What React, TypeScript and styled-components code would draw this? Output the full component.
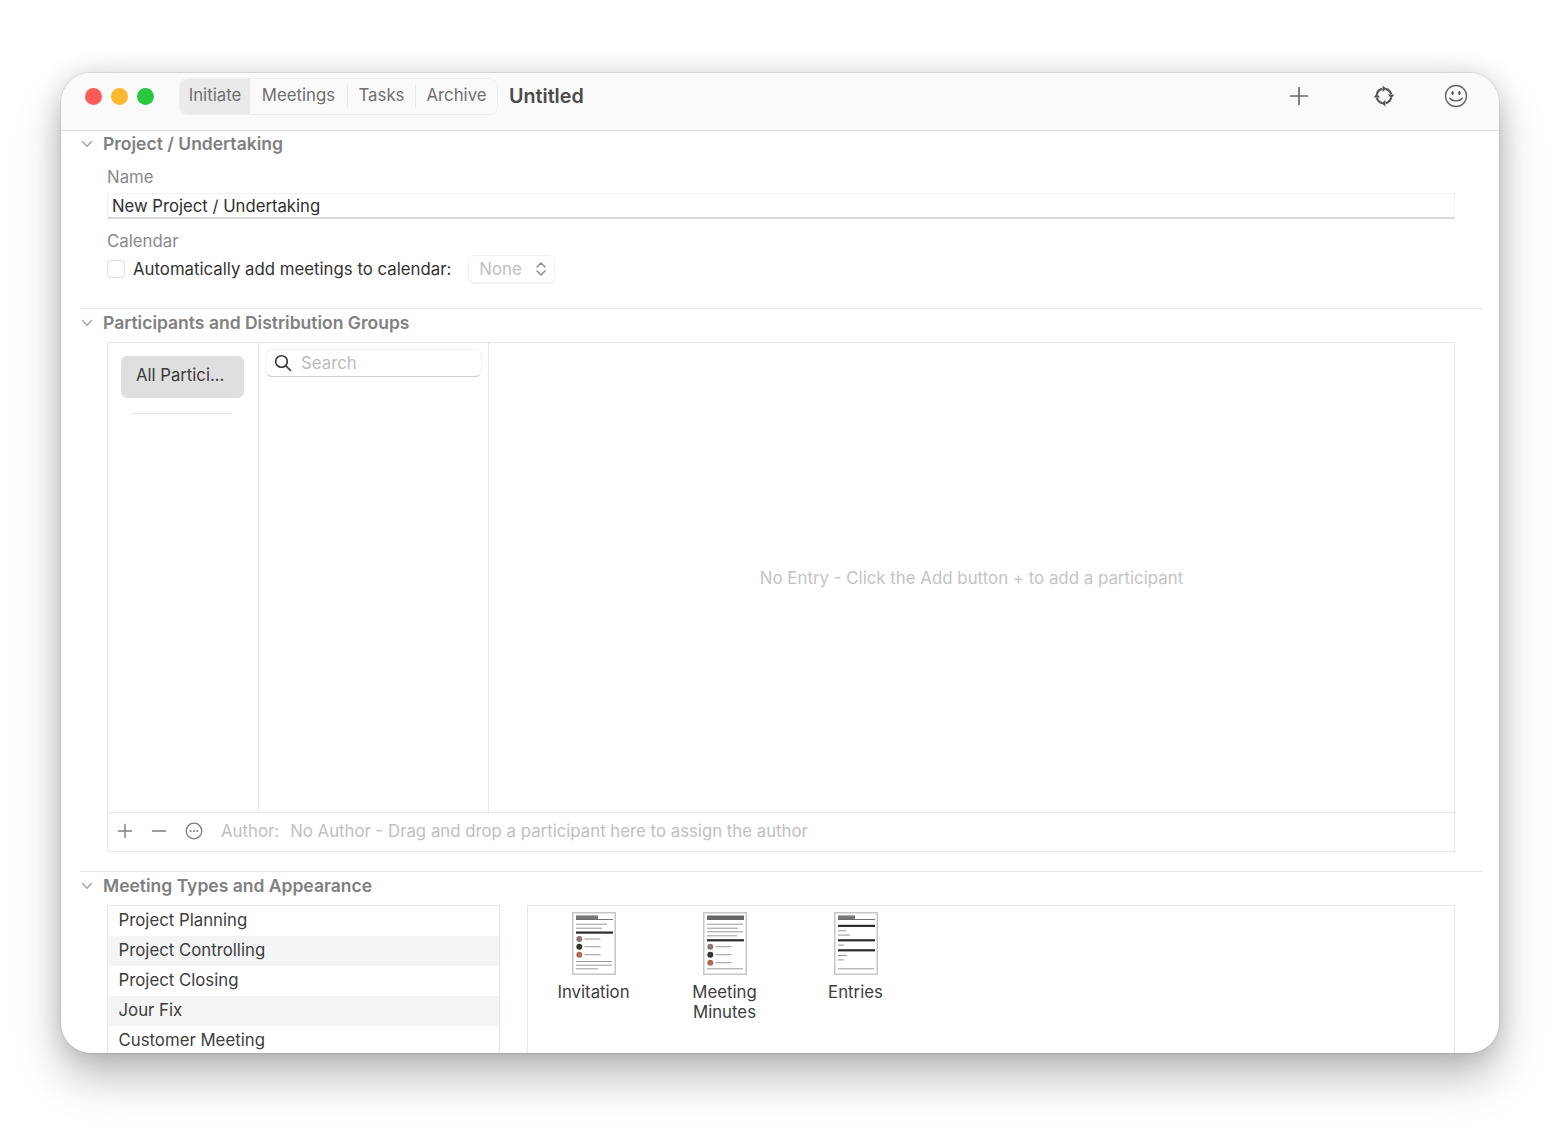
import React from "react";
import styled, { createGlobalStyle } from "styled-components";

const Global = createGlobalStyle`
  html, body { margin: 0; padding: 0; background: #fff; }
  body { font-family: Inter, "Noto Sans", "Liberation Sans", sans-serif; -webkit-font-smoothing: antialiased; overflow: hidden; }
  * { box-sizing: border-box; }
`;

const Page = styled.div`
  width: 1560px;
  height: 1134px;
  padding: 73px 61px 81px;
  background: #fff;
`;
const Win = styled.div`
  width: 1438px;
  height: 980px;
  background: #fff;
  border-radius: 30px;
  overflow: hidden;
  display: flex;
  flex-direction: column;
  box-shadow: 0 0 0 1px rgba(0, 0, 0, 0.07), 0 0 24px rgba(0, 0, 0, 0.14), 0 24px 44px rgba(0, 0, 0, 0.26);
`;
const TitleBar = styled.header`
  flex: none;
  height: 58px;
  background: #fbfafa;
  border-bottom: 1px solid #e2e1e1;
  display: flex;
  align-items: center;
  padding: 0 0 11px 24px;
`;
const Lights = styled.div`
  display: flex;
  gap: 9px;
  margin-right: 25px;
`;
const Light = styled.span<{ $c: string }>`
  width: 17px;
  height: 17px;
  border-radius: 50%;
  background: ${(p) => p.$c};
`;
const Tabs = styled.nav`
  display: flex;
  align-items: center;
  width: 319px;
  height: 37px;
  border: 1px solid #efeeee;
  border-radius: 8px;
  background: #fbfafa;
  font-size: 16.8px;
  color: #6f6f6f;
`;
const Tab = styled.div<{ $w: number; $active?: boolean; $sep?: boolean }>`
  width: ${(p) => p.$w}px;
  height: ${(p) => (p.$active ? "35px" : "23px")};
  display: flex;
  align-items: center;
  justify-content: center;
  padding-bottom: 2px;
  border-radius: ${(p) => (p.$active ? "8px 0 0 8px" : "0")};
  background: ${(p) => (p.$active ? "#ebeaea" : "transparent")};
  border-right: ${(p) => (p.$sep ? "1px solid #ebeaea" : "none")};
`;
const Title = styled.div`
  margin-left: 11px;
  font-size: 19.7px;
  font-weight: 600;
  color: #4b4b4b;
`;
const Tools = styled.div`
  margin-left: auto;
  display: flex;
  align-items: center;
  color: #6b6b6b;
`;
const Tool = styled.span<{ $w: number }>`
  width: ${(p) => p.$w}px;
  display: flex;
  justify-content: center;
`;
const Content = styled.main`
  flex: 1;
  min-height: 0;
  overflow: hidden;
  padding: 0 16px 0 19px;
`;
const Section = styled.section<{ $h: number; $rule?: boolean }>`
  height: ${(p) => p.$h}px;
  border-top: ${(p) => (p.$rule ? "1px solid #e7e7e7" : "none")};
`;
const FirstSection = styled(Section)`
  margin-top: -1px;
`;
const SectionHead = styled.div`
  height: 26px;
  display: flex;
  align-items: center;
  font-size: 17.5px;
  font-weight: 600;
  color: #808080;
`;
const Chevron = styled.svg`
  width: 12px;
  height: 8px;
  margin: 2px 10px 0 1px;
  flex: none;
`;
const Body = styled.div`
  padding-left: 27px;
  padding-right: 28px;
`;
const Label = styled.div`
  height: 22px;
  display: flex;
  align-items: center;
  font-size: 16.8px;
  color: #8a8a8a;
`;
const NameLabel = styled(Label)`
  margin-top: 10px;
`;
const Field = styled.div`
  height: 26px;
  margin-top: 5px;
  padding: 0 4px;
  display: flex;
  align-items: center;
  border: 1px solid #f1f1f1;
  border-bottom: 2px solid #d8d8d8;
  font-size: 16.7px;
  color: #2f2f2f;
`;
const CalLabel = styled(Label)`
  margin-top: 11px;
`;
const CalRow = styled.div`
  height: 28px;
  margin-top: 3px;
  display: flex;
  align-items: center;
  font-size: 16.8px;
  color: #333;
`;
const Check = styled.span`
  width: 18px;
  height: 18px;
  margin: -1px 8px 0 0;
  border: 1px solid #dedede;
  border-radius: 4px;
  background: #fff;
`;
const SelectBox = styled.div`
  width: 87px;
  height: 28px;
  margin-left: 17px;
  padding: 0 7px 0 10px;
  display: flex;
  align-items: center;
  justify-content: space-between;
  border: 1px solid #f0f0f0;
  border-radius: 6px;
  box-shadow: 0 1px 1px rgba(0, 0, 0, 0.05);
  color: #c0c0c0;
`;
const Panel = styled.div`
  height: 510px;
  margin-top: 7px;
  display: flex;
  flex-direction: column;
  border: 1px solid #e6e6e6;
`;
const Columns = styled.div`
  flex: 1;
  display: flex;
  min-height: 0;
`;
const GroupCol = styled.div`
  width: 151px;
  flex: none;
  border-right: 1px solid #e6e6e6;
  padding: 13px 13px 0 13px;
`;
const GroupBtn = styled.div`
  width: 123px;
  height: 42px;
  padding: 0 0 4px 15px;
  display: flex;
  align-items: center;
  border-radius: 6px;
  background: #dfdfdf;
  font-size: 16.7px;
  color: #3a3a3a;
`;
const GroupRule = styled.div`
  width: 100px;
  height: 1px;
  margin: 15px 0 0 11px;
  background: #e6e6e6;
`;
const SearchCol = styled.div`
  width: 230px;
  flex: none;
  border-right: 1px solid #e6e6e6;
  padding: 6px 6px 0 6px;
`;
const SearchBox = styled.div`
  height: 28px;
  display: flex;
  align-items: center;
  padding-left: 8px;
  border: 1px solid #f1f1f1;
  border-bottom: 1px solid #cfcfcf;
  border-radius: 7px;
  font-size: 16.8px;
  color: #bcbcbc;
  svg { margin-right: 9px; color: #333; }
`;
const Empty = styled.div`
  flex: 1;
  display: flex;
  align-items: center;
  justify-content: center;
  font-size: 16.85px;
  color: #c4c4c4;
`;
const Foot = styled.div`
  flex: none;
  height: 39px;
  padding: 0 0 2px 9px;
  display: flex;
  align-items: center;
  border-top: 1px solid #e6e6e6;
  font-size: 16.8px;
  color: #c0c0c0;
`;
const FootIcon = styled.span`
  width: 34px;
  display: flex;
  color: #7d7d7d;
`;
const Author = styled.span`
  margin-left: 2px;
  margin-right: 11px;
`;
const Bottom = styled.div`
  margin-top: 7px;
  display: flex;
  gap: 27px;
`;
const TypeList = styled.div`
  width: 393px;
  flex: none;
  height: 160px;
  border: 1px solid #e6e6e6;
`;
const TypeRow = styled.div<{ $alt?: boolean }>`
  height: 30px;
  padding: 0 0 2px 10.5px;
  display: flex;
  align-items: center;
  background: ${(p) => (p.$alt ? "#f3f4f4" : "#fff")};
  font-size: 16.8px;
  color: #3d3d3d;
`;
const Gallery = styled.div`
  flex: 1;
  height: 160px;
  padding: 6px 0 0 0;
  display: flex;
  border: 1px solid #e6e6e6;
`;
const Doc = styled.div`
  width: 131px;
  display: flex;
  flex-direction: column;
  align-items: center;
  font-size: 16.8px;
  line-height: 20px;
  color: #3d3d3d;
  text-align: center;
`;
const Thumb = styled.svg`
  width: 44px;
  height: 63px;
  margin-bottom: 7px;
  display: block;
  filter: blur(0.45px);
`;

const Chev = () => (
  <Chevron viewBox="0 0 12 8" fill="none" stroke="#a5a5a5" strokeWidth="1.4" strokeLinecap="round" strokeLinejoin="round">
    <path d="M1.5 1.5 6 6.2l4.5-4.7" />
  </Chevron>
);

const line = (y: number, w: number, k: string) => (
  <rect key={k} x="4" y={y} width={w} height="1" fill="#9a9a9a" />
);
const bar = (y: number, k: string) => (
  <rect key={k} x="4" y={y} width="37" height="2.2" fill="#2b2b2b" />
);
const avatar = (y: number, c: string, k: string) => (
  <g key={k}>
    <circle cx="7.3" cy={y} r="3" fill={c} />
    <rect x="12.5" y={y - 0.5} width="16" height="1" fill="#9a9a9a" />
  </g>
);
const Frame = ({ children }: { children: React.ReactNode }) => (
  <Thumb viewBox="0 0 44 63">
    <rect x="0.75" y="0.75" width="42.5" height="61.5" fill="#fff" stroke="#c6c6c6" strokeWidth="1.5" />
    {children}
  </Thumb>
);
const InvitationThumb = () => (
  <Frame>
    <rect x="4" y="3.4" width="22" height="4" fill="#777" />
    <rect x="4" y="7.2" width="37" height="0.8" fill="#555" />
    {line(11.7, 31, "a")}
    {line(15.7, 26, "b")}
    {bar(19.5, "h")}
    {avatar(27, "#8d7a70", "p1")}
    {avatar(34.7, "#3a3532", "p2")}
    {avatar(42.7, "#b06a50", "p3")}
    {line(49, 36, "c")}
    {line(52.7, 36, "d")}
    {line(56.3, 22, "e")}
  </Frame>
);
const MinutesThumb = () => (
  <Frame>
    <rect x="4" y="3.5" width="37" height="4.5" fill="#666" />
    {line(11.7, 36, "a")}
    {line(15.7, 31, "b")}
    {line(19.3, 36, "c")}
    {line(23.3, 30, "d")}
    {bar(27.2, "h")}
    {avatar(34.7, "#8d7a70", "p1")}
    {avatar(42.7, "#3a3532", "p2")}
    {avatar(50.7, "#b06a50", "p3")}
    {line(56.3, 36, "e")}
  </Frame>
);
const EntriesThumb = () => (
  <Frame>
    <rect x="4" y="3.4" width="17" height="4" fill="#777" />
    <rect x="4" y="7.2" width="37" height="0.8" fill="#555" />
    {bar(12.8, "h1")}
    {line(18.3, 8, "a")}
    {line(22.6, 12, "b")}
    {bar(27.2, "h2")}
    {line(32.6, 6, "c")}
    {bar(37.2, "h3")}
    {line(43, 9, "d")}
    {line(47.4, 6, "e")}
    {line(56.3, 36, "f")}
  </Frame>
);

export default function App() {
  return (
    <Page>
      <Global />
      <Win>
        <TitleBar>
          <Lights>
            <Light $c="#fc5b57" />
            <Light $c="#fdb82e" />
            <Light $c="#29c840" />
          </Lights>
          <Tabs>
            <Tab $w={70} $active>Initiate</Tab>
            <Tab $w={98} $sep>Meetings</Tab>
            <Tab $w={68} $sep>Tasks</Tab>
            <Tab $w={81}>Archive</Tab>
          </Tabs>
          <Title>Untitled</Title>
          <Tools>
            <Tool $w={88}>
              <svg width="20" height="20" viewBox="0 0 20 20" fill="none" stroke="currentColor" strokeWidth="1.7" strokeLinecap="round"><path d="M10 1.5v17M1.5 10h17" /></svg>
            </Tool>
            <Tool $w={82}>
              <svg width="22" height="22" viewBox="0 0 22 22" fill="none" stroke="#555" strokeWidth="2.2">
                <path d="M3.9 9.2A7.4 7.4 0 0 1 9.4 3.9" />
                <path d="M12.8 3.9a7.4 7.4 0 0 1 5.3 5.3" />
                <path d="M18.1 12.8a7.4 7.4 0 0 1-5.3 5.3" />
                <path d="M9.2 18.1a7.4 7.4 0 0 1-5.3-5.3" />
                <path d="M9.6 0.6 13.4 3.8 9.6 7zM21.4 9.6 18.2 13.4 15 9.6zM12.4 21.4 8.6 18.2 12.4 15zM0.6 12.4 3.8 8.6 7 12.4z" fill="#555" stroke="none" />
              </svg>
            </Tool>
            <Tool $w={62}>
              <svg width="24" height="24" viewBox="0 0 24 24" fill="none" stroke="#666" strokeWidth="1.4" strokeLinecap="round">
                <circle cx="12" cy="12" r="10.5" />
                <ellipse cx="8.6" cy="9" rx="1.2" ry="1.9" fill="#555" stroke="none" />
                <ellipse cx="15.4" cy="9" rx="1.2" ry="1.9" fill="#555" stroke="none" />
                <path d="M5.8 14.2c2.8 3.6 9.6 3.6 12.4 0" />
              </svg>
            </Tool>
            <Tool $w={12} />
          </Tools>
        </TitleBar>
        <Content>
          <FirstSection $h={178}>
            <SectionHead><Chev />Project / Undertaking</SectionHead>
            <Body>
              <NameLabel>Name</NameLabel>
              <Field>New Project / Undertaking</Field>
              <CalLabel>Calendar</CalLabel>
              <CalRow>
                <Check />
                Automatically add meetings to calendar:
                <SelectBox>
                  None
                  <svg width="12" height="16" viewBox="0 0 12 16" fill="none" stroke="#8c8c8c" strokeWidth="1.5" strokeLinecap="round" strokeLinejoin="round"><path d="M2 6l4-4 4 4M2 10l4 4 4-4" /></svg>
                </SelectBox>
              </CalRow>
            </Body>
          </FirstSection>
          <Section $h={563} $rule>
            <SectionHead><Chev />Participants and Distribution Groups</SectionHead>
            <Body>
              <Panel>
                <Columns>
                  <GroupCol>
                    <GroupBtn>All Partici...</GroupBtn>
                    <GroupRule />
                  </GroupCol>
                  <SearchCol>
                    <SearchBox>
                      <svg width="18" height="18" viewBox="0 0 18 18" fill="none" stroke="currentColor" strokeWidth="1.6" strokeLinecap="round"><circle cx="7.5" cy="7.5" r="5.8" /><path d="M11.8 11.8 16.5 16.5" /></svg>
                      Search
                    </SearchBox>
                  </SearchCol>
                  <Empty>No Entry - Click the Add button + to add a participant</Empty>
                </Columns>
                <Foot>
                  <FootIcon><svg width="16" height="16" viewBox="0 0 16 16" fill="none" stroke="currentColor" strokeWidth="1.4" strokeLinecap="round"><path d="M8 1.5v13M1.5 8h13" /></svg></FootIcon>
                  <FootIcon><svg width="16" height="16" viewBox="0 0 16 16" fill="none" stroke="currentColor" strokeWidth="1.4" strokeLinecap="round"><path d="M1.5 8h13" /></svg></FootIcon>
                  <FootIcon>
                    <svg width="18" height="18" viewBox="0 0 18 18" fill="none" stroke="currentColor" strokeWidth="1.3"><circle cx="9" cy="9" r="7.8" /><circle cx="5.6" cy="9" r="1" fill="currentColor" stroke="none" /><circle cx="9" cy="9" r="1" fill="currentColor" stroke="none" /><circle cx="12.4" cy="9" r="1" fill="currentColor" stroke="none" /></svg>
                  </FootIcon>
                  <Author>Author:</Author>
                  No Author - Drag and drop a participant here to assign the author
                </Foot>
              </Panel>
            </Body>
          </Section>
          <Section $h={240} $rule>
            <SectionHead><Chev />Meeting Types and Appearance</SectionHead>
            <Body>
              <Bottom>
                <TypeList>
                  <TypeRow>Project Planning</TypeRow>
                  <TypeRow $alt>Project Controlling</TypeRow>
                  <TypeRow>Project Closing</TypeRow>
                  <TypeRow $alt>Jour Fix</TypeRow>
                  <TypeRow>Customer Meeting</TypeRow>
                </TypeList>
                <Gallery>
                  <Doc><InvitationThumb />Invitation</Doc>
                  <Doc><MinutesThumb />Meeting<br />Minutes</Doc>
                  <Doc><EntriesThumb />Entries</Doc>
                </Gallery>
              </Bottom>
            </Body>
          </Section>
        </Content>
      </Win>
    </Page>
  );
}
